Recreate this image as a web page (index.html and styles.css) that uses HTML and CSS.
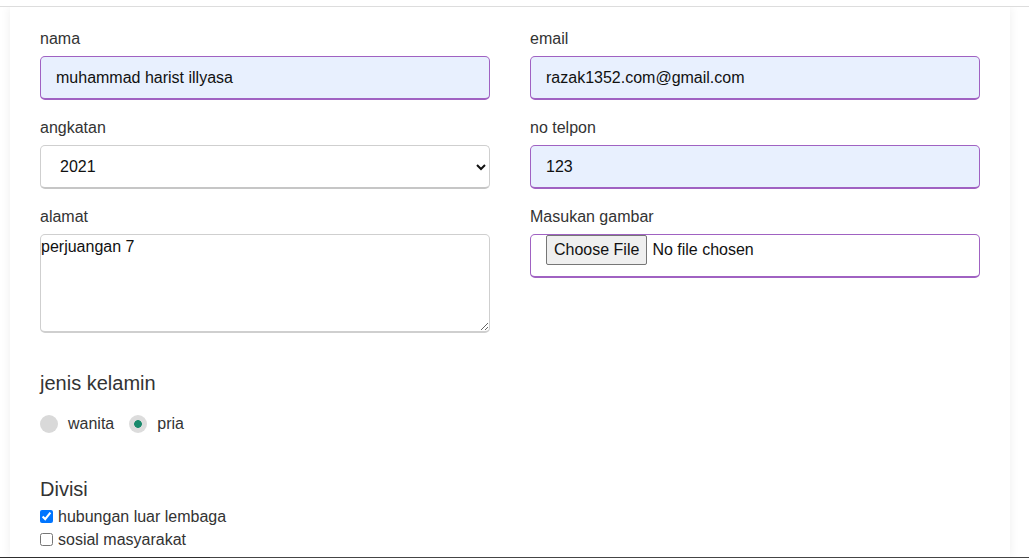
FILE: index.html
```html
<!DOCTYPE html>
<html lang="id">
<head>
<meta charset="utf-8">
<title>Form</title>
<link rel="stylesheet" href="styles.css">
</head>
<body>
<div class="topbar"></div>
<main class="card">
  <form class="form">
    <div class="grid">
      <div class="field">
        <label class="label" for="nama">nama</label>
        <input class="control filled" id="nama" type="text" value="muhammad harist illyasa">
      </div>
      <div class="field">
        <label class="label" for="email">email</label>
        <input class="control filled" id="email" type="text" value="razak1352.com@gmail.com">
      </div>
      <div class="field">
        <label class="label" for="angkatan">angkatan</label>
        <select class="control plain" id="angkatan">
          <option>2021</option>
          <option>2020</option>
          <option>2019</option>
        </select>
      </div>
      <div class="field">
        <label class="label" for="telp">no telpon</label>
        <input class="control filled" id="telp" type="text" value="123">
      </div>
      <div class="field">
        <label class="label" for="alamat">alamat</label>
        <textarea class="area" id="alamat">perjuangan 7</textarea>
      </div>
      <div class="field">
        <label class="label" for="gambar">Masukan gambar</label>
        <input class="file" id="gambar" type="file">
      </div>
    </div>

    <h3 class="heading gender-heading">jenis kelamin</h3>
    <div class="radios">
      <label class="radio"><span class="dot"></span>wanita</label>
      <label class="radio"><span class="dot checked"></span>pria</label>
    </div>

    <h3 class="heading divisi-heading">Divisi</h3>
    <label class="check"><input type="checkbox" checked>hubungan luar lembaga</label>
    <label class="check"><input type="checkbox">sosial masyarakat</label>
  </form>
</main>
<div class="bottomline"></div>
</body>
</html>
```

FILE: styles.css
```css
* { box-sizing: border-box; }

html, body {
  margin: 0;
  height: 558px;
  overflow: hidden;
  background: #ffffff;
}

body {
  display: flex;
  flex-direction: column;
  font-family: "Liberation Sans", Arial, sans-serif;
  color: #333;
}

.topbar {
  height: 7px;
  flex: none;
  background: #fff;
  border-bottom: 1px solid #dddddd;
  position: relative;
  z-index: 2;
}

.card {
  flex: 1;
  width: 1000px;
  margin-left: 10px;
  background: #fff;
  box-shadow: 0 0 10px rgba(0, 0, 0, 0.07);
  padding: 22px 30px 0 30px;
  overflow: hidden;
}

.grid {
  display: grid;
  grid-template-columns: 450px 450px;
  column-gap: 40px;
  row-gap: 18px;
  align-items: start;
}

.field {
  display: flex;
  flex-direction: column;
}

.label {
  font-size: 16px;
  line-height: 19px;
  margin-bottom: 8px;
  color: #333;
}

.control {
  height: 44px;
  width: 100%;
  font-family: "Liberation Sans", Arial, sans-serif;
  font-size: 16px;
  color: #111;
  padding: 0 15px;
  border-radius: 5px;
  border: 1px solid;
  border-bottom-width: 2px;
  outline: none;
}

.filled {
  background: #e8f0fe;
  border-color: #a062c2;
}

.plain {
  background: #fff;
  border-color: #cfcfcf;
  border-bottom-color: #c6c6c6;
}

.area {
  height: 99px;
  width: 100%;
  padding: 3px 0 0 0;
  font-family: "Liberation Sans", Arial, sans-serif;
  font-size: 16px;
  color: #111;
  border: 1px solid #cfcfcf;
  border-bottom-width: 2px;
  border-radius: 5px;
  resize: vertical;
  outline: none;
}

.file {
  height: 44px;
  width: 100%;
  padding: 0 15px;
  border: 1px solid #a062c2;
  border-bottom-width: 2px;
  border-radius: 5px;
  font-family: "Liberation Sans", Arial, sans-serif;
  font-size: 16px;
  color: #111;
  background: #fff;
}

.file::file-selector-button {
  font-family: "Liberation Sans", Arial, sans-serif;
  font-size: 16px;
  color: #111;
  height: 30px;
  padding: 0 7px;
  margin: 0 5px 0 0;
  background: #efefef;
  border: 1px solid #767676;
  border-radius: 2px;
}

.heading {
  font-size: 20px;
  line-height: 24px;
  font-weight: normal;
  margin: 0;
  color: #333;
}

.gender-heading { margin-top: 38px; }

.radios {
  display: flex;
  align-items: center;
  gap: 15px;
  margin-top: 20px;
  height: 18px;
}

.radio {
  display: flex;
  align-items: center;
  gap: 10px;
  font-size: 16px;
  color: #333;
}

.dot {
  width: 18px;
  height: 18px;
  border-radius: 50%;
  background: #d9d9d9;
  display: inline-block;
}

.dot.checked {
  background: radial-gradient(circle, #198a6c 0 3.5px, #dcdcdc 4.2px);
}

.divisi-heading { margin-top: 44px; }

.form > .check:first-of-type { margin-top: 4px; }

.check {
  display: flex;
  align-items: center;
  height: 23px;
  font-size: 16px;
  color: #333;
}

.check input {
  width: 13px;
  height: 13px;
  margin: 0 5px 0 0;
}

.bottomline {
  height: 1px;
  flex: none;
  background: linear-gradient(to right, #2e2e2e 210px, #454545 210px);
}
```
